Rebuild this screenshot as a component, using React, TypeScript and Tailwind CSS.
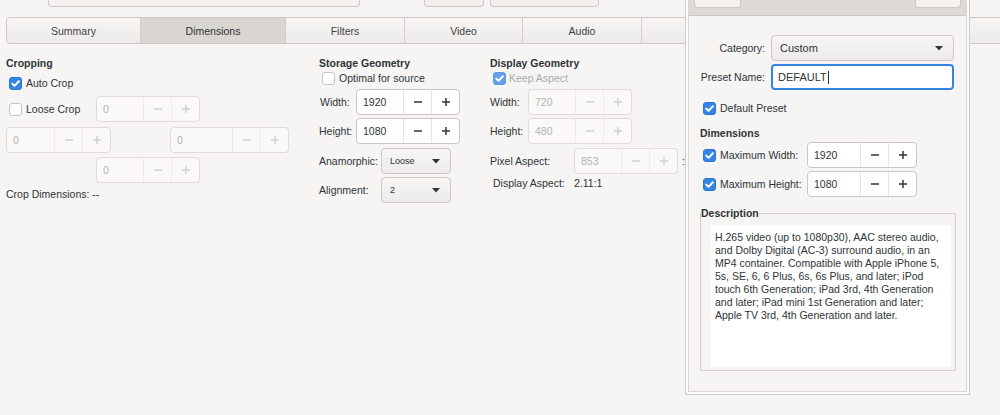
import React from "react";

type CheckProps = { checked?: boolean; disabled?: boolean };

function Check({ checked, disabled }: CheckProps) {
  if (checked) {
    return (
      <span
        className={`flex h-[13px] w-[13px] shrink-0 items-center justify-center rounded-[3px] border ${
          disabled ? "border-[#5f9ce8] bg-[#629fe9]" : "border-[#2a76d6] bg-[#3584e4]"
        }`}
      >
        <svg width="11" height="11" viewBox="0 0 11 11">
          <path d="M2.2 5.6 L4.5 7.9 L8.9 3.2" fill="none" stroke="white" strokeWidth="2" strokeLinecap="round" strokeLinejoin="round" />
        </svg>
      </span>
    );
  }
  return <span className="h-[13px] w-[13px] shrink-0 rounded-[3px] border border-[#c9c3be] bg-white" />;
}

type SpinProps = { value: string; className: string; disabled?: boolean };

function Spin({ value, className, disabled }: SpinProps) {
  const c = disabled ? "#cfcfcf" : "#2e3436";
  return (
    <div
      className={`flex h-[26px] shrink-0 rounded-[4px] border ${
        disabled ? "border-[#e0dcd8] bg-[#faf9f8] text-[#b3b3b3]" : "border-[#cdc7c2] bg-white text-[#2e3436]"
      } ${className}`}
    >
      <div className="flex flex-1 items-center pl-[6px]">{value}</div>
      <div className={`flex w-[28px] items-center justify-center border-l ${disabled ? "border-[#eeebe8]" : "border-[#e8e5e2]"}`}>
        <svg width="10" height="10" viewBox="0 0 10 10">
          <line x1="1" y1="5" x2="9" y2="5" stroke={c} strokeWidth="1.5" />
        </svg>
      </div>
      <div className={`flex w-[28px] items-center justify-center border-l ${disabled ? "border-[#eeebe8]" : "border-[#e8e5e2]"}`}>
        <svg width="10" height="10" viewBox="0 0 10 10">
          <line x1="1" y1="5" x2="9" y2="5" stroke={c} strokeWidth="1.5" />
          <line x1="5" y1="1" x2="5" y2="9" stroke={c} strokeWidth="1.5" />
        </svg>
      </div>
    </div>
  );
}

function Arrow() {
  return (
    <svg width="8" height="5" viewBox="0 0 8 5">
      <path d="M0 0 H8 L4 4.5 Z" fill="#2e3436" />
    </svg>
  );
}

function Combo({ value, className }: { value: string; className: string }) {
  return (
    <div
      className={`flex h-[26px] shrink-0 items-center justify-between rounded-[4px] border border-[#cdc7c2] bg-gradient-to-b from-[#f7f6f5] to-[#edebe9] pl-[8px] pr-[10px] ${className}`}
    >
      <span className="text-[9px]">{value}</span>
      <Arrow />
    </div>
  );
}

const tabs = [
  { label: "Summary", w: "w-[133px]", active: false },
  { label: "Dimensions", w: "w-[145px]", active: true },
  { label: "Filters", w: "w-[119px]", active: false },
  { label: "Video", w: "w-[118px]", active: false },
  { label: "Audio", w: "w-[119px]", active: false },
  { label: "Subtitles", w: "w-[300px]", active: false },
  { label: "", w: "w-[200px]", active: false },
];

const descLines = [
  "H.265 video (up to 1080p30), AAC stereo audio,",
  "and Dolby Digital (AC-3) surround audio, in an",
  "MP4 container. Compatible with Apple iPhone 5,",
  "5s, SE, 6, 6 Plus, 6s, 6s Plus, and later; iPod",
  "touch 6th Generation; iPad 3rd, 4th Generation",
  "and later; iPad mini 1st Generation and later;",
  "Apple TV 3rd, 4th Generation and later.",
];

export default function App() {
  return (
    <div className="relative h-[415px] w-[1000px] overflow-hidden bg-[#f6f5f4] font-['Liberation_Sans',Arial,sans-serif] text-[10.5px] leading-[14px] text-[#2e3436]">
      {/* top strip (cut-off widgets) */}
      <div className="flex h-[7px]">
        <div className="ml-[48px] h-[7px] w-[312px] rounded-b-[4px] border border-t-0 border-[#cdc7c2] bg-[#f4f3f2]" />
        <div className="ml-[64px] h-[7px] w-[60px] rounded-b-[4px] border border-t-0 border-[#cdc7c2] bg-[#f1f0ee]" />
        <div className="ml-[6px] h-[7px] w-[109px] rounded-b-[4px] border border-t-0 border-[#cdc7c2] bg-[#f1f0ee]" />
      </div>

      {/* tab bar */}
      <div className="ml-[6px] mt-[10px] flex h-[27px] w-[1100px] rounded-[4px] border border-[#cdc7c2]">
        {tabs.map((t, i) => (
          <div
            key={i}
            className={`flex shrink-0 items-center justify-center ${t.w} ${i > 0 ? "border-l border-[#d3cdc8]" : "rounded-l-[4px]"} ${
              t.active ? "bg-[#d9d5d1] text-[#2e3436]" : "bg-gradient-to-b from-[#f6f5f4] to-[#edebe9] text-[#3d4244]"
            }`}
          >
            {t.label}
          </div>
        ))}
      </div>

      {/* content */}
      <div className="flex pt-[12px]">
        {/* Cropping */}
        <div className="ml-[6px] flex w-[312px] shrink-0 flex-col">
          <div className="h-[14px] font-bold">Cropping</div>
          <div className="mt-[4px] flex h-[18px] items-center pl-[3px]">
            <Check checked />
            <span className="ml-[4px]">Auto Crop</span>
          </div>
          <div className="mt-[4px] flex h-[26px] items-center">
            <div className="flex w-[90px] items-center pl-[3px]">
              <Check />
              <span className="ml-[4px]">Loose Crop</span>
            </div>
            <Spin value="0" disabled className="w-[104px]" />
          </div>
          <div className="mt-[5px] flex">
            <Spin value="0" disabled className="w-[105px]" />
            <Spin value="0" disabled className="ml-[59px] w-[119px]" />
          </div>
          <div className="mt-[4px] flex pl-[90px]">
            <Spin value="0" disabled className="w-[104px]" />
          </div>
          <div className="mt-[4px] h-[14px]">Crop Dimensions: --</div>
        </div>

        {/* Storage Geometry */}
        <div className="flex w-[172px] shrink-0 flex-col">
          <div className="h-[14px] pl-[1px] font-bold">Storage Geometry</div>
          <div className="mt-[1px] flex h-[14px] items-center pl-[4px]">
            <Check />
            <span className="ml-[4px]">Optimal for source</span>
          </div>
          <div className="mt-[4px] flex items-center">
            <span className="w-[38px] pl-[2px]">Width:</span>
            <Spin value="1920" className="w-[104px]" />
          </div>
          <div className="mt-[3px] flex items-center">
            <span className="w-[38px] pl-[1px]">Height:</span>
            <Spin value="1080" className="w-[104px]" />
          </div>
          <div className="mt-[4px] flex items-center">
            <span className="w-[63px] pl-[1px]">Anamorphic:</span>
            <Combo value="Loose" className="w-[70px]" />
          </div>
          <div className="mt-[3px] flex items-center">
            <span className="w-[63px] pl-[1px]">Alignment:</span>
            <Combo value="2" className="w-[70px]" />
          </div>
        </div>

        {/* Display Geometry */}
        <div className="flex flex-1 flex-col">
          <div className="h-[14px] font-bold">Display Geometry</div>
          <div className="mt-[1px] flex h-[14px] items-center pl-[3px]">
            <Check checked disabled />
            <span className="ml-[3px] text-[#a9abac]">Keep Aspect</span>
          </div>
          <div className="mt-[4px] flex items-center">
            <span className="w-[38px]">Width:</span>
            <Spin value="720" disabled className="w-[104px]" />
          </div>
          <div className="mt-[3px] flex items-center">
            <span className="w-[38px]">Height:</span>
            <Spin value="480" disabled className="w-[104px]" />
          </div>
          <div className="mt-[4px] flex items-center">
            <span className="w-[84px]">Pixel Aspect:</span>
            <Spin value="853" disabled className="w-[104px]" />
            <span className="ml-[4px]">:</span>
          </div>
          <div className="mt-[2px] flex h-[14px] items-center">
            <span className="w-[84px] pl-[3px]">Display Aspect:</span>
            <span>2.11:1</span>
          </div>
        </div>
      </div>

      {/* Preset dialog window */}
      <div className="absolute left-[685px] top-0 h-[395px] w-[285px] border border-t-0 border-[#cfcac6] bg-[#fbfbfa] px-[2px] pb-[2px]">
        <div className="flex h-full flex-col border border-t-0 border-[#d9d5d1] bg-[#f6f5f4]">
          <div className="flex h-[16px] shrink-0 items-start justify-between border-b border-[#cdc7c2] bg-[#dedad6] px-[5px]">
            <div className="h-[8px] w-[47px] rounded-b-[4px] border border-t-0 border-[#cdc7c2] bg-[#f4f3f2]" />
            <div className="h-[8px] w-[46px] rounded-b-[4px] border border-t-0 border-[#cdc7c2] bg-[#f4f3f2]" />
          </div>

          <div className="mt-[19px] flex items-center">
            <span className="w-[76px] text-right">Category:</span>
            <div className="ml-[6px] flex h-[26px] w-[183px] items-center justify-between rounded-[4px] border border-[#cdc7c2] bg-gradient-to-b from-[#f7f6f5] to-[#edebe9] pl-[8px] pr-[10px]">
              <span className="text-[11px]">Custom</span>
              <Arrow />
            </div>
          </div>
          <div className="mt-[3px] flex items-center">
            <span className="w-[76px] text-right">Preset Name:</span>
            <div className="ml-[6px] flex h-[26px] w-[183px] items-center rounded-[4px] border-2 border-[#3584e4] bg-white pl-[5px] text-[11px]">
              <span>DEFAULT</span>
              <span className="ml-[1px] h-[13px] w-[1px] bg-[#2e3436]" />
            </div>
          </div>
          <div className="mt-[11px] flex h-[14px] items-center pl-[14px]">
            <Check checked />
            <span className="ml-[4px]">Default Preset</span>
          </div>
          <div className="mt-[11px] h-[14px] pl-[11px] font-bold">Dimensions</div>
          <div className="mt-[2px] flex items-center">
            <div className="flex w-[118px] items-center pl-[14px]">
              <Check checked />
              <span className="ml-[4px]">Maximum Width:</span>
            </div>
            <Spin value="1920" className="w-[110px]" />
          </div>
          <div className="mt-[3px] flex items-center">
            <div className="flex w-[118px] items-center pl-[14px]">
              <Check checked />
              <span className="ml-[4px]">Maximum Height:</span>
            </div>
            <Spin value="1080" className="w-[110px]" />
          </div>

          <fieldset className="ml-[11px] mt-[9px] w-[256px] border border-[#d5d0cc] pb-[3px] pl-[10px] pr-[4px]">
            <legend className="-ml-[10px] h-[14px] font-bold leading-[14px]">Description</legend>
            <div className="mt-[5px] h-[142px] bg-white pl-[4px] pt-[6px] text-[10.5px] leading-[13px]">
              {descLines.map((l) => (
                <div key={l} className="whitespace-nowrap">
                  {l}
                </div>
              ))}
            </div>
          </fieldset>
        </div>
      </div>
    </div>
  );
}
